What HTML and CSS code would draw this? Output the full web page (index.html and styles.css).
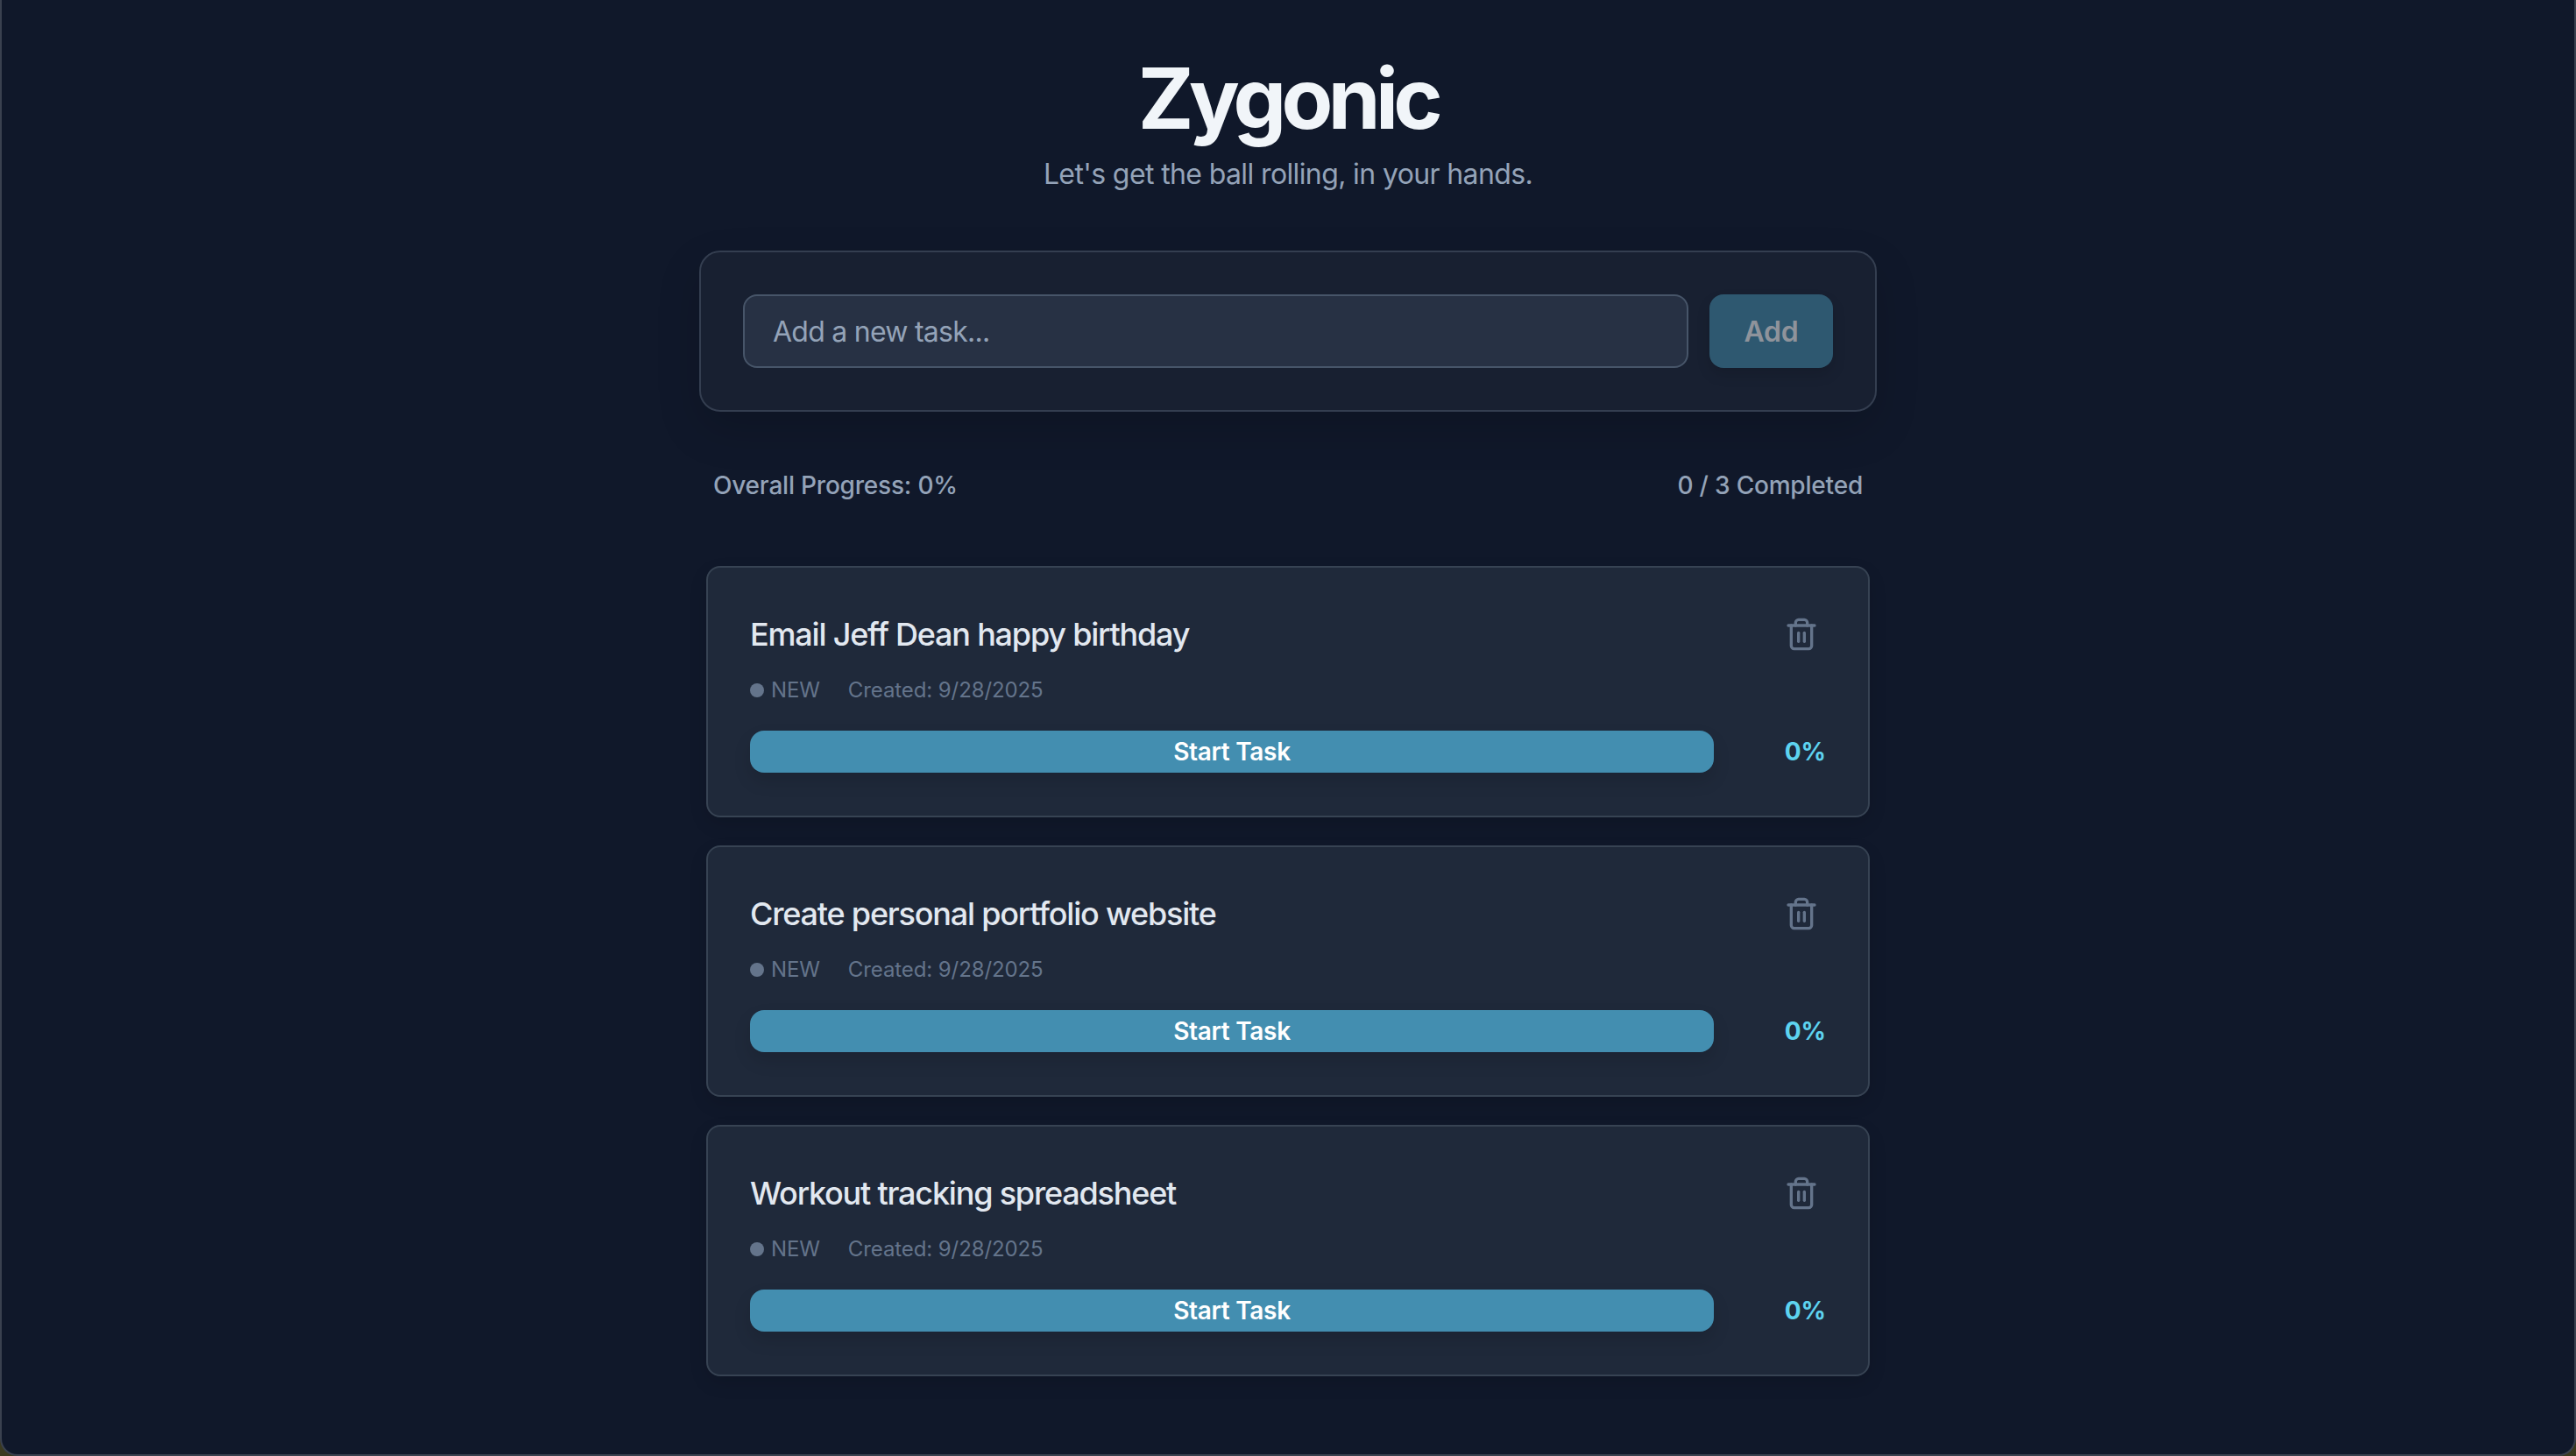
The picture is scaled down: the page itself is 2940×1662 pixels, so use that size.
FILE: index.html
```html
<!DOCTYPE html>
<html lang="en">

<head>
  <meta charset="UTF-8" />
  <meta name="viewport" content="width=device-width, initial-scale=1.0" />
  <title>Zygonic</title>
  <link rel="stylesheet" href="styles.css">
</head>

<body>
  <main class="app">
    <header class="app-header">
      <h1>Zygonic</h1>
      <p>Let's get the ball rolling, in your hands.</p>
    </header>

    <form class="task-form">
      <input class="task-input" type="text" placeholder="Add a new task..." />
      <button class="add-btn" type="button">Add</button>
    </form>

    <div class="summary">
      <span>Overall Progress: 0%</span>
      <span>0 / 3 Completed</span>
    </div>

    <ul class="task-list">
      <li class="task">
        <div class="task-top">
          <h2>Email Jeff Dean happy birthday</h2>
          <button class="delete-btn" type="button" aria-label="Delete">
            <svg viewBox="0 0 24 24"><path d="M3 6h18" /><path d="M19 6v14c0 1-1 2-2 2H7c-1 0-2-1-2-2V6" /><path d="M8 6V4c0-1 1-2 2-2h4c1 0 2 1 2 2v2" /><path d="M10 11v6" /><path d="M14 11v6" /></svg>
          </button>
        </div>
        <div class="task-meta">
          <span class="status"><i></i>NEW</span>
          <span>Created: 9/28/2025</span>
        </div>
        <div class="task-bottom">
          <button class="start-btn" type="button">Start Task</button>
          <span class="percent">0%</span>
        </div>
      </li>
      <li class="task">
        <div class="task-top">
          <h2>Create personal portfolio website</h2>
          <button class="delete-btn" type="button" aria-label="Delete">
            <svg viewBox="0 0 24 24"><path d="M3 6h18" /><path d="M19 6v14c0 1-1 2-2 2H7c-1 0-2-1-2-2V6" /><path d="M8 6V4c0-1 1-2 2-2h4c1 0 2 1 2 2v2" /><path d="M10 11v6" /><path d="M14 11v6" /></svg>
          </button>
        </div>
        <div class="task-meta">
          <span class="status"><i></i>NEW</span>
          <span>Created: 9/28/2025</span>
        </div>
        <div class="task-bottom">
          <button class="start-btn" type="button">Start Task</button>
          <span class="percent">0%</span>
        </div>
      </li>
      <li class="task">
        <div class="task-top">
          <h2>Workout tracking spreadsheet</h2>
          <button class="delete-btn" type="button" aria-label="Delete">
            <svg viewBox="0 0 24 24"><path d="M3 6h18" /><path d="M19 6v14c0 1-1 2-2 2H7c-1 0-2-1-2-2V6" /><path d="M8 6V4c0-1 1-2 2-2h4c1 0 2 1 2 2v2" /><path d="M10 11v6" /><path d="M14 11v6" /></svg>
          </button>
        </div>
        <div class="task-meta">
          <span class="status"><i></i>NEW</span>
          <span>Created: 9/28/2025</span>
        </div>
        <div class="task-bottom">
          <button class="start-btn" type="button">Start Task</button>
          <span class="percent">0%</span>
        </div>
      </li>
    </ul>
  </main>
</body>

</html>
```

FILE: styles.css
```css
* {
  box-sizing: border-box;
}

html {
  background: #3b3a20;
}

body {
  margin: 0;
  height: 1662px;
  overflow: hidden;
  background: #10182a;
  border: 2px solid #3a414f;
  border-top: none;
  border-radius: 0 0 20px 20px;
  font-family: Inter, "Liberation Sans", sans-serif;
  color: #f1f5f9;
}

.app {
  width: 1344px;
  margin: 0 auto;
  padding-top: 64px;
}

.app-header {
  text-align: center;
  margin-bottom: 63px;
}

.app-header h1 {
  margin: 0 0 15px;
  font-size: 96px;
  line-height: 96px;
  font-weight: 700;
  letter-spacing: -5.6px;
}

.app-header p {
  margin: 0;
  font-size: 32px;
  line-height: 48px;
  letter-spacing: -0.62px;
  color: #94a3b8;
}

.task-form {
  display: flex;
  gap: 24px;
  padding: 48px;
  background: #182031;
  border: 2px solid #343e50;
  border-radius: 24px;
  box-shadow: 0 20px 50px rgba(0, 0, 0, 0.15);
}

.task-input {
  flex: 1;
  height: 84px;
  padding: 0 32px;
  background: #273144;
  border: 2px solid #475569;
  border-radius: 16px;
  font-family: inherit;
  font-size: 32px;
  letter-spacing: -0.75px;
  color: #f1f5f9;
}

.task-input::placeholder {
  color: #94a3b8;
  opacity: 1;
}

.add-btn {
  width: 141px;
  height: 84px;
  border: none;
  border-radius: 16px;
  background: #2e5870;
  color: #8f939b;
  font-family: inherit;
  font-size: 32px;
  font-weight: 600;
  letter-spacing: -0.3px;
  box-shadow: 0 8px 16px rgba(0, 0, 0, 0.12);
}

.summary {
  display: flex;
  justify-content: space-between;
  margin-top: 64px;
  padding: 0 16px;
  font-size: 28px;
  line-height: 40px;
  font-weight: 500;
  letter-spacing: -0.2px;
  color: #94a3b8;
}

.task-list {
  list-style: none;
  margin: 72px 8px 0;
  padding: 0;
  display: flex;
  flex-direction: column;
  gap: 32px;
}

.task {
  height: 287px;
  padding: 48px;
  background: #1f293a;
  border: 2px solid #374353;
  border-radius: 16px;
  box-shadow: 0 8px 20px rgba(0, 0, 0, 0.12);
}

.task-top {
  display: flex;
  justify-content: space-between;
  align-items: center;
}

.task-top h2 {
  margin: 0;
  font-size: 36px;
  line-height: 56px;
  font-weight: 450;
  letter-spacing: -1.2px;
  color: #e2e8f0;
}

.delete-btn {
  width: 56px;
  height: 56px;
  padding: 8px;
  border: none;
  background: none;
}

.delete-btn svg {
  display: block;
  width: 40px;
  height: 40px;
  fill: none;
  stroke: #64748b;
  stroke-width: 2;
  stroke-linecap: round;
  stroke-linejoin: round;
}

.task-meta {
  display: flex;
  gap: 32px;
  margin-top: 18px;
  font-size: 24px;
  line-height: 36px;
  letter-spacing: -0.1px;
  color: #64748b;
}

.status {
  display: flex;
  align-items: center;
  gap: 8px;
}

.status i {
  width: 16px;
  height: 16px;
  border-radius: 50%;
  background: #64748b;
}

.task-bottom {
  display: flex;
  align-items: center;
  margin-top: 28px;
}

.start-btn {
  width: 1100px;
  height: 48px;
  padding: 0;
  border: none;
  border-radius: 16px;
  background: #438eb0;
  color: #fff;
  font-family: inherit;
  font-size: 28px;
  font-weight: 600;
  letter-spacing: -0.3px;
  box-shadow: 0 10px 20px rgba(0, 0, 0, 0.12);
}

.percent {
  margin-left: auto;
  font-size: 28px;
  font-weight: 700;
  color: #5dd3f0;
}
```
